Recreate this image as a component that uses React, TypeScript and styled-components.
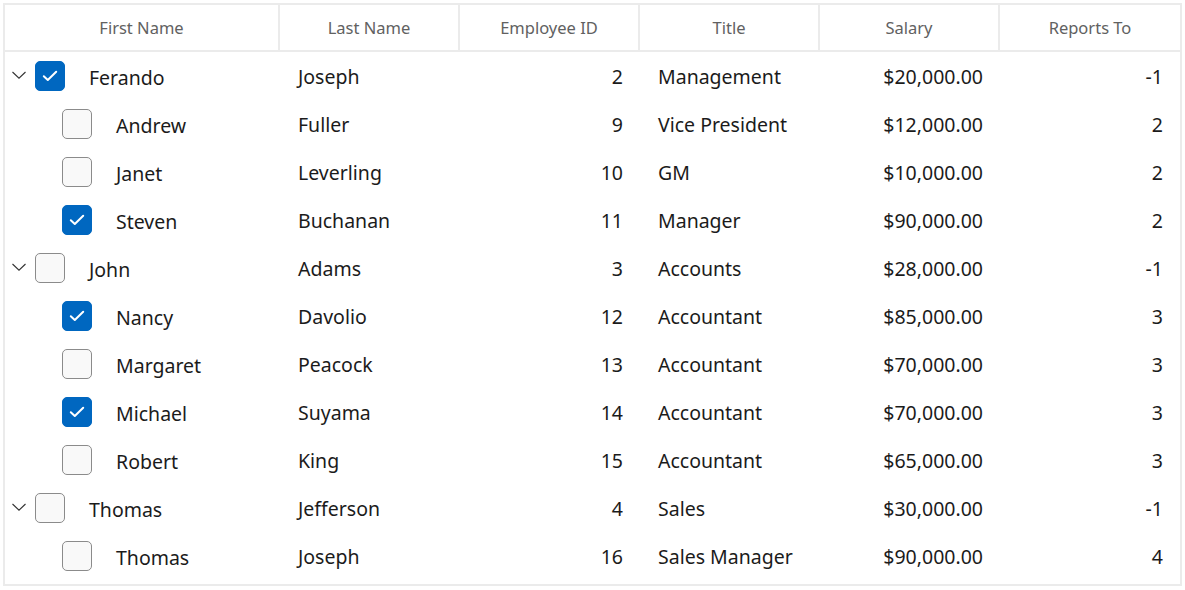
import React from 'react';
import styled, { createGlobalStyle } from 'styled-components';

interface Employee {
  first: string;
  last: string;
  id: number;
  title: string;
  salary: number;
  reportsTo: number;
  level: 0 | 1;
  checked: boolean;
}

const employees: Employee[] = [
  { first: 'Ferando', last: 'Joseph', id: 2, title: 'Management', salary: 20000, reportsTo: -1, level: 0, checked: true },
  { first: 'Andrew', last: 'Fuller', id: 9, title: 'Vice President', salary: 12000, reportsTo: 2, level: 1, checked: false },
  { first: 'Janet', last: 'Leverling', id: 10, title: 'GM', salary: 10000, reportsTo: 2, level: 1, checked: false },
  { first: 'Steven', last: 'Buchanan', id: 11, title: 'Manager', salary: 90000, reportsTo: 2, level: 1, checked: true },
  { first: 'John', last: 'Adams', id: 3, title: 'Accounts', salary: 28000, reportsTo: -1, level: 0, checked: false },
  { first: 'Nancy', last: 'Davolio', id: 12, title: 'Accountant', salary: 85000, reportsTo: 3, level: 1, checked: true },
  { first: 'Margaret', last: 'Peacock', id: 13, title: 'Accountant', salary: 70000, reportsTo: 3, level: 1, checked: false },
  { first: 'Michael', last: 'Suyama', id: 14, title: 'Accountant', salary: 70000, reportsTo: 3, level: 1, checked: true },
  { first: 'Robert', last: 'King', id: 15, title: 'Accountant', salary: 65000, reportsTo: 3, level: 1, checked: false },
  { first: 'Thomas', last: 'Jefferson', id: 4, title: 'Sales', salary: 30000, reportsTo: -1, level: 0, checked: false },
  { first: 'Thomas', last: 'Joseph', id: 16, title: 'Sales Manager', salary: 90000, reportsTo: 4, level: 1, checked: false },
];

const columns = ['First Name', 'Last Name', 'Employee ID', 'Title', 'Salary', 'Reports To'];

const formatSalary = (n: number) =>
  '$' + n.toLocaleString('en-US', { minimumFractionDigits: 2, maximumFractionDigits: 2 });

const GlobalStyle = createGlobalStyle`
  body {
    margin: 0;
    background: #ffffff;
    font-family: "Noto Sans", "Open Sans", sans-serif;
  }
`;

const Page = styled.div`
  padding: 3px 0 0 3px;
`;

const Grid = styled.div`
  width: 1175px;
  border: 2px solid #ebebeb;
  padding-bottom: 4px;
`;

const Row = styled.div<{ $header?: boolean }>`
  display: grid;
  grid-template-columns: 275px repeat(5, 180px);
  height: ${(p) => (p.$header ? '45px' : '48px')};
  border-bottom: ${(p) => (p.$header ? '2px solid #ebebeb' : 'none')};
`;

const HeaderCell = styled.div<{ $last?: boolean }>`
  display: flex;
  align-items: center;
  justify-content: center;
  font-size: 16.5px;
  color: #616161;
  border-right: ${(p) => (p.$last ? 'none' : '2px solid #ebebeb')};
`;

const Cell = styled.div<{ $align?: 'left' | 'right' }>`
  display: flex;
  align-items: center;
  justify-content: ${(p) => (p.$align === 'right' ? 'flex-end' : 'flex-start')};
  padding: 0 17px 0 18px;
  font-size: 19.5px;
  color: #1b1b1b;
  white-space: nowrap;
`;

const TreeCell = styled.div<{ $level: number }>`
  display: flex;
  align-items: center;
  padding-left: ${(p) => (p.$level === 0 ? '6px' : '57px')};
  font-size: 19.5px;
  color: #1b1b1b;
  padding-top: 2px;
`;

const Chevron = styled.svg`
  width: 16px;
  height: 10px;
  margin-right: 8px;
  margin-top: -4px;
`;

const Box = styled.span<{ $checked: boolean }>`
  width: 30px;
  height: 30px;
  box-sizing: border-box;
  border-radius: 5px;
  border: 1px solid ${(p) => (p.$checked ? '#0067c0' : '#8b8b8b')};
  background: ${(p) => (p.$checked ? '#0067c0' : '#f9f9f9')};
  display: flex;
  align-items: center;
  justify-content: center;
  margin-right: 24px;
  margin-top: -2px;
  flex-shrink: 0;
`;

function CheckBox({ checked }: { checked: boolean }) {
  return (
    <Box $checked={checked}>
      {checked && (
        <svg width="16" height="12" viewBox="0 0 16 12">
          <path d="M1.8 6.2 L5.8 10 L14.2 1.8" fill="none" stroke="#ffffff" strokeWidth="2" strokeLinecap="round" strokeLinejoin="round" />
        </svg>
      )}
    </Box>
  );
}

export default function App() {
  return (
    <Page>
      <GlobalStyle />
      <Grid>
        <Row $header>
          {columns.map((c, i) => (
            <HeaderCell key={c} $last={i === columns.length - 1}>
              {c}
            </HeaderCell>
          ))}
        </Row>
        {employees.map((e) => (
          <Row key={e.id}>
            <TreeCell $level={e.level}>
              {e.level === 0 && (
                <Chevron viewBox="0 0 16 10">
                  <path d="M1.5 2 L8 8.2 L14.5 2" fill="none" stroke="#333" strokeWidth="1.1" />
                </Chevron>
              )}
              <CheckBox checked={e.checked} />
              {e.first}
            </TreeCell>
            <Cell>{e.last}</Cell>
            <Cell $align="right">{e.id}</Cell>
            <Cell>{e.title}</Cell>
            <Cell $align="right">{formatSalary(e.salary)}</Cell>
            <Cell $align="right">{e.reportsTo}</Cell>
          </Row>
        ))}
      </Grid>
    </Page>
  );
}
